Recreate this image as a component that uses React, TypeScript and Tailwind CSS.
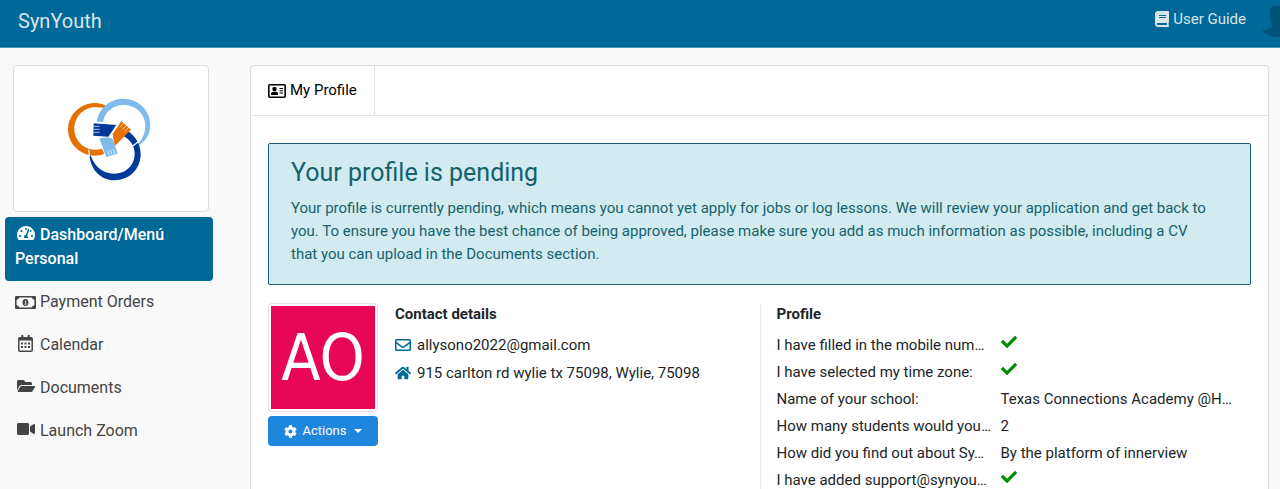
import type { ReactNode } from "react";
import { FaBook, FaCheck, FaCog, FaFolderOpen, FaHome, FaRegEnvelope, FaTachometerAlt, FaVideo } from "react-icons/fa";

const navItems = [
  { label: "Dashboard/Menú Personal", icon: <FaTachometerAlt className="size-[18px]" />, active: true },
  { label: "Payment Orders", icon: <BanknoteIcon /> },
  { label: "Calendar", icon: <CalendarIcon /> },
  { label: "Documents", icon: <FaFolderOpen className="size-[18px]" /> },
  { label: "Launch Zoom", icon: <FaVideo className="size-[18px]" /> },
];

const profileRows: { label: string; value: ReactNode }[] = [
  { label: "I have filled in the mobile num…", value: <Tick /> },
  { label: "I have selected my time zone:", value: <Tick /> },
  { label: "Name of your school:", value: "Texas Connections Academy @H…" },
  { label: "How many students would you…", value: "2" },
  { label: "How did you find out about Sy…", value: "By the platform of innerview" },
  { label: "I have added support@synyou…", value: <Tick /> },
];

function Tick() {
  return <FaCheck className="mt-[2px] size-4 text-[#008a00]" aria-label="Yes" />;
}

function BanknoteIcon() {
  return (
    <svg viewBox="0 0 21 13" className="h-[13px] w-[21px]" aria-hidden="true">
      <rect x="0.800" y="0.800" width="19.400" height="11.400" rx="0.500" fill="none" stroke="currentColor" strokeWidth="1.600" />
      <path fill="currentColor" d="M1 1H4.500Q4 3.500 1 4Z M20 1H16.500Q17 3.500 20 4Z M1 12H4.500Q4 9.500 1 9Z M20 12H16.500Q17 9.500 20 9Z" />
      <ellipse cx="10.500" cy="6.500" rx="2.900" ry="3.500" fill="currentColor" />
      <path d="M9.800 5H10.700V8M9.500 8.200H11.700" fill="none" stroke="#f9f9f9" strokeWidth="0.800" />
    </svg>
  );
}

function CalendarIcon() {
  return (
    <svg viewBox="0 0 15 17" className="h-[17px] w-[15px]" aria-hidden="true" fill="currentColor">
      <rect x="0.800" y="2.800" width="13.400" height="13.400" rx="1" fill="none" stroke="currentColor" strokeWidth="1.500" />
      <path d="M1 2.500H14V5.500H1Z M3.300 0H5.300V3H3.300Z M9.700 0H11.700V3H9.700Z" />
      <path d="M3 7.500H5V9.500H3Z M6.500 7.500H8.500V9.500H6.500Z M10 7.500H12V9.500H10Z M3 11H5V13H3Z M6.500 11H8.500V13H6.500Z M10 11H12V13H10Z" />
    </svg>
  );
}

function ProfileCardIcon() {
  return (
    <svg viewBox="0 0 18 14" className="h-[14px] w-[18px]" aria-hidden="true" fill="currentColor">
      <rect x="0.800" y="0.800" width="16.400" height="12.400" rx="1" fill="none" stroke="currentColor" strokeWidth="1.600" />
      <circle cx="6.500" cy="5" r="2.200" />
      <path d="M3 11V10Q3 7.800 5 7.800H8Q10 7.800 10 10V11Z" />
      <path d="M11.500 4H15V5H11.500Z M11.500 6.300H15V7.300H11.500Z M11.500 8.600H15V9.600H11.500Z" />
    </svg>
  );
}

function Logo() {
  return (
    <svg viewBox="3 -4 300 300" className="size-[100px]" role="img" aria-label="SynYouth logo">
      {/* orange ring */}
      <path
        fill="#e57200"
        d="M155 60 C136 39 108 34 83 41 C48 51 24 82 24 117 C24 160 60 196 104 196 Q119 196 133 191 L126 175 Q115 178 105 178 C71 178 43 150 43 116 C43 80 71 51 104 51 C122 50 140 53 155 60Z"
      />
      {/* light blue ring */}
      <path
        fill="#80bbeb"
        d="M110 94 C116 55 149 25 190 25 C235 25 271 60 271 105 C271 136 252 161 220 173 C242 157 256 134 256 107 C256 72 228 44 191 44 C158 44 134 66 129 95Z"
      />
      {/* dark blue ring */}
      <path
        fill="#003a98"
        d="M203 122 C226 137 242 162 242 192 C242 236 208 270 163 270 C120 270 87 234 88 182 C98 225 126 250 163 250 C197 250 224 225 224 191 C224 167 211 148 190 137Z"
      />
      <path stroke="#fff" strokeWidth="4" d="M217 168 L234 155 M86 178 L89 198" />
      {/* hands */}
      <path fill="#003a98" d="M101 99 L169 104 L145 139 L100 136Z" />
      <path fill="#e57200" d="M184 92 L213 118 L164 168 L158 132Z" />
      <path fill="#80bbeb" d="M118 144 L145 141 L158 146 L173 190 L139 200Z" />
      <g stroke="#fff" strokeWidth="2">
        <path d="M100 108 H119 M100 117 H119 M100 126 H119" />
        <path d="M192 98 L180 111 M199 105 L187 118 M206 111 L194 124" />
        <path d="M148 198 L143 181 M157 196 L151 178 M165 193 L159 176" />
      </g>
    </svg>
  );
}

function Header() {
  return (
    <header className="flex h-12 shrink-0 items-start justify-between overflow-hidden border-b border-[#4d97ba] bg-[#006998] pl-[18px] text-[#d9e4ea]">
      <a href="#" className="pt-2 text-xl leading-[26px]">
        SynYouth
      </a>
      <div className="flex shrink-0">
        <a href="#" className="flex items-center gap-[3px] self-start pt-[7px] text-[15px] leading-6">
          <FaBook className="size-4" />
          User Guide
        </a>
        <a href="#" aria-label="Account" className="-mr-[18px] ml-4 pt-[6px]">
          <svg viewBox="0 0 36 32" className="h-8 w-9" fill="#005479">
            <path d="M8 6 Q8 0 13 0 H23 Q28 0 28 6 V13 Q27 18 25 21 Q28 22 36 25 Q29 32 18 31 Q7 32 0 25 Q9 22 11 20 Q8 16 8 6Z" />
          </svg>
        </a>
      </div>
    </header>
  );
}

function Sidebar() {
  return (
    <aside className="w-[208px] shrink-0">
      <div className="mb-[5px] ml-2 mr-1 flex h-[147px] items-center justify-center rounded border border-[#dcdcdc] bg-white">
        <Logo />
      </div>
      <nav className="flex flex-col gap-[3px]">
        {navItems.map(({ label, icon, active }) => (
          <a
            key={label}
            href="#"
            className={
              active
                ? "rounded bg-[#006998] px-[10px] pb-[10px] pt-[6px] font-medium leading-6 text-white"
                : "px-[10px] pb-[10px] pt-[6px] leading-6 text-[#444]"
            }
          >
            <span className="mr-1 inline-flex w-[21px] justify-center align-[-2px]">{icon}</span>
            {label}
          </a>
        ))}
      </nav>
    </aside>
  );
}

function PendingAlert() {
  return (
    <div
      role="alert"
      className="rounded-xs border border-[#15606c] bg-[#d1ebf0] pb-[18px] pl-[22px] pr-10 pt-[13px] text-[#17616d]"
    >
      <h1 className="mb-2 text-[25px] leading-8">Your profile is pending</h1>
      <p className="leading-[23px]">
        Your profile is currently pending, which means you cannot yet apply for jobs or log lessons. We will review
        your application and get back to you. To ensure you have the best chance of being approved, please make sure
        you add as much information as possible, including a CV that you can upload in the Documents section.
      </p>
    </div>
  );
}

export default function App() {
  return (
    <div className="flex h-screen flex-col overflow-hidden bg-[#f9f9f9] font-[Roboto,sans-serif] text-[#212529]">
      <Header />
      <div className="flex min-h-0 flex-1 gap-[37px] pl-[5px] pr-[11px] pt-[17px]">
        <Sidebar />

        <main className="min-w-0 flex-1 overflow-hidden rounded-t border border-b-0 border-[#dcdcdc] bg-white text-[15px]">
          {/* Tabs */}
          <div className="flex border-b border-[#e5e5e5]">
            <button
              type="button"
              className="flex h-[49px] items-center gap-1 border-r border-[#e0e0e0] px-[17px] text-black"
            >
              <ProfileCardIcon />
              My Profile
            </button>
          </div>

          <div className="px-[17px] pt-[27px]">
            <PendingAlert />

            <div className="mt-[18px] flex">
              <div className="w-[110px] shrink-0">
                <div className="rounded border border-[#dee2e6] bg-white p-[2px]">
                  <div className="flex h-[103px] items-center justify-center overflow-hidden bg-[#e80756] font-['DejaVu_Sans_Condensed','DejaVu_Sans',sans-serif] text-[64px] text-white">
                    AO
                  </div>
                </div>
                <button
                  type="button"
                  className="mt-1 flex h-[30px] w-full items-center justify-center rounded bg-[#1f86dd] text-[13px] text-white"
                >
                  <FaCog className="mr-[5px] size-[13px]" />
                  Actions
                  <span className="ml-[7px] border-x-4 border-t-4 border-x-transparent border-t-white" />
                </button>
              </div>

              <section className="min-w-0 flex-1 pl-[17px]">
                <h2 className="mb-[5px] font-bold leading-[23px]">Contact details</h2>
                <ul className="leading-7">
                  <li className="flex items-center gap-[6px]">
                    <FaRegEnvelope className="size-4 text-[#006998]" />
                    allysono2022@gmail.com
                  </li>
                  <li className="flex items-center gap-[6px]">
                    <FaHome className="size-4 text-[#006998]" />
                    915 carlton rd wylie tx 75098, Wylie, 75098
                  </li>
                </ul>
              </section>

              <section className="w-1/2 shrink-0 border-l border-[#e9ecef] pl-4">
                <h2 className="mb-[6px] font-bold leading-[23px]">Profile</h2>
                <dl>
                  {profileRows.map(({ label, value }) => (
                    <div key={label} className="grid grid-cols-[220px_1fr] gap-1 whitespace-nowrap leading-[27px]">
                      <dt>{label}</dt>
                      <dd>{value}</dd>
                    </div>
                  ))}
                </dl>
              </section>
            </div>
          </div>
        </main>
      </div>
    </div>
  );
}
